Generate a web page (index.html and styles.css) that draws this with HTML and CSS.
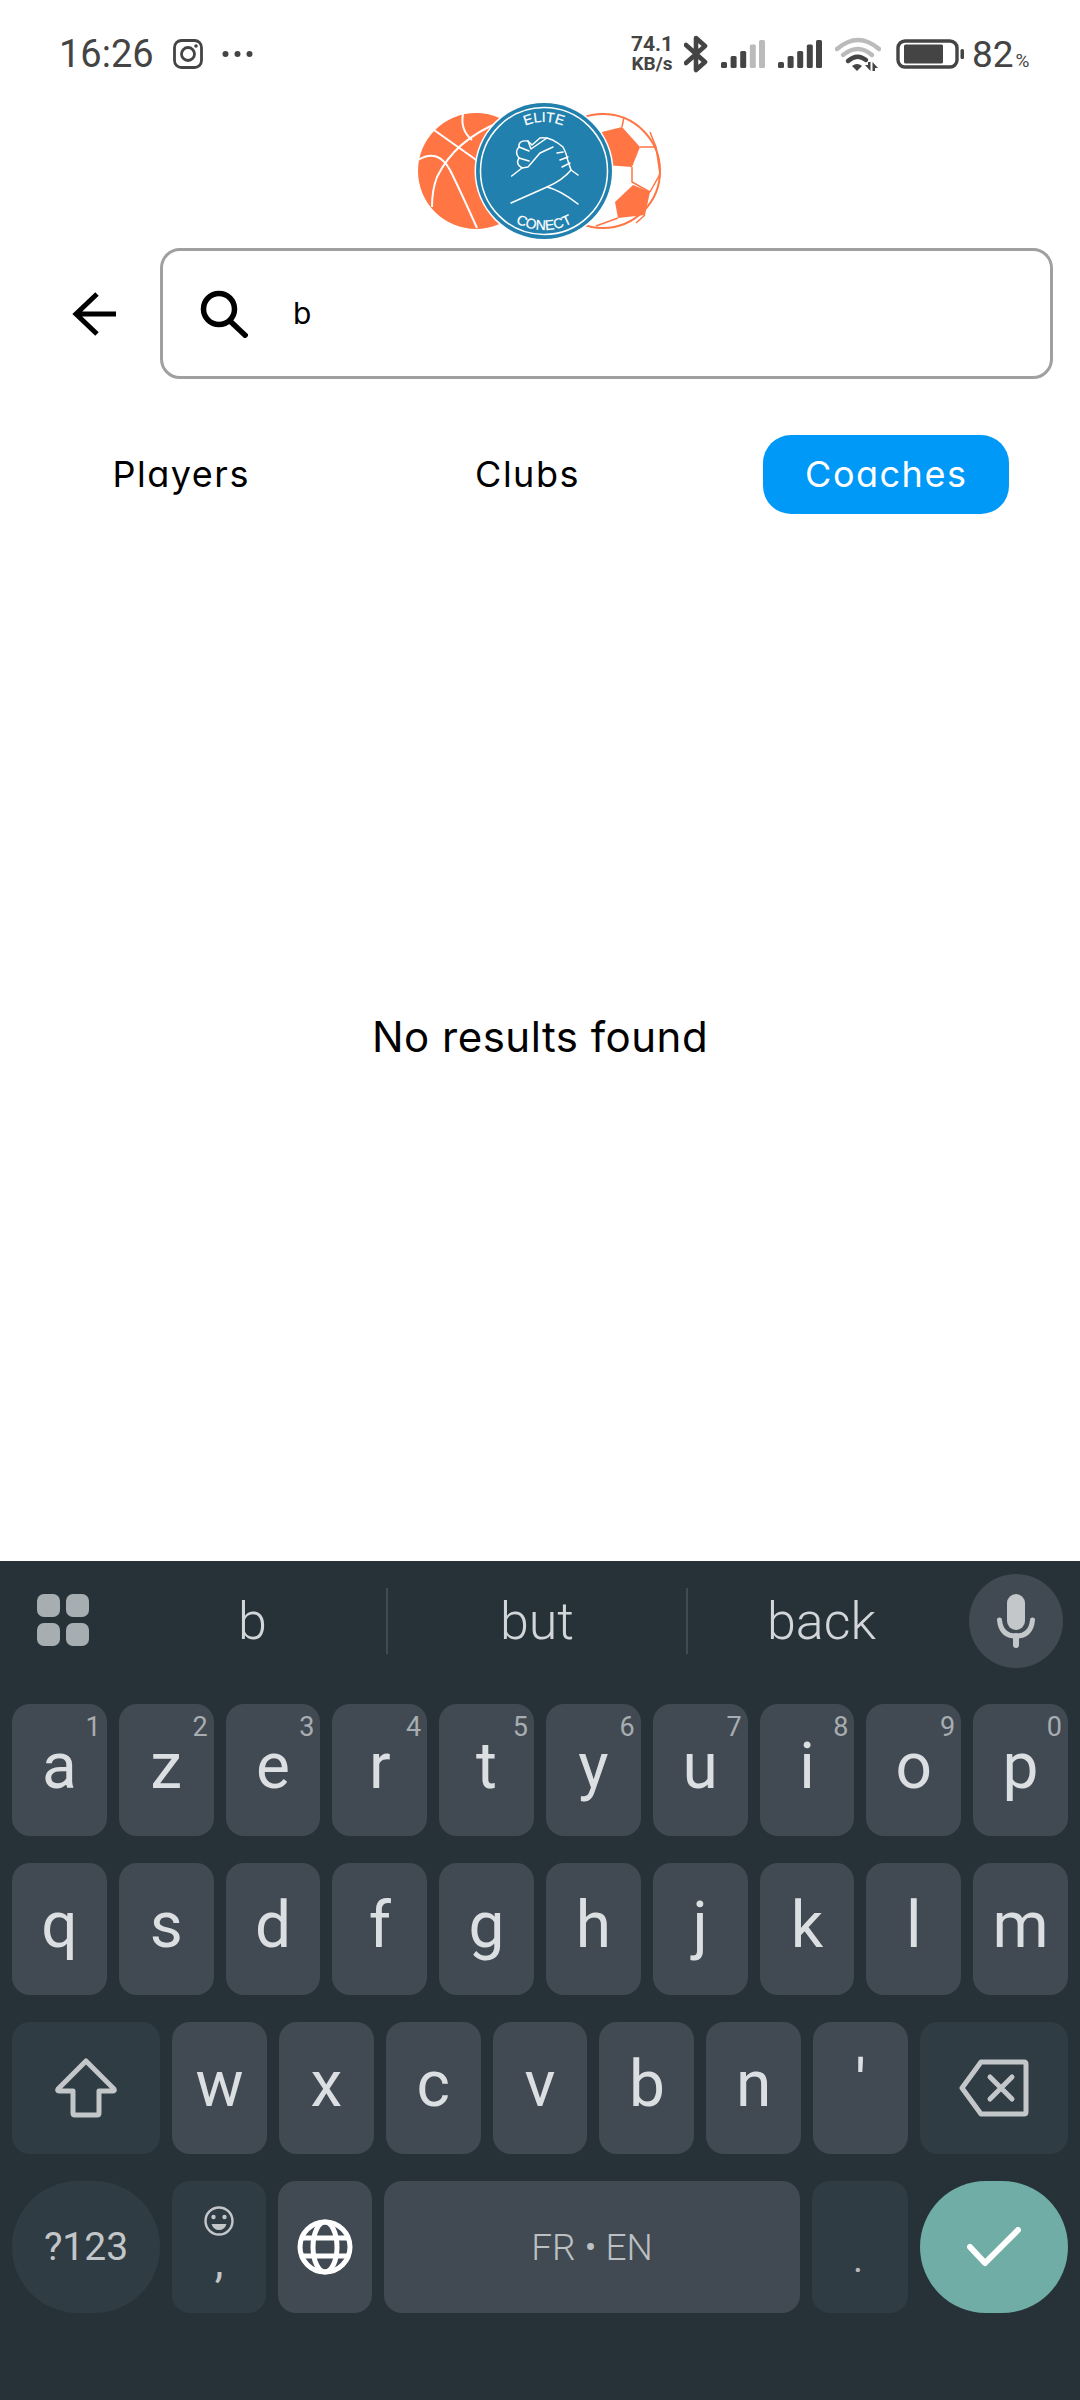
FILE: index.html
```html
<!DOCTYPE html>
<html lang="en">
<head>
    <meta charset="UTF-8" />
    <meta name="viewport" content="width=device-width, initial-scale=1.0" />
    <title>Elite Conect search</title>
    <link rel="stylesheet" href="styles.css">
</head>
<body>

<!-- Phone status bar -->
<header class="status">
    <div class="status-left">
        <span class="time">16:26</span>
        <svg class="ic-insta" viewBox="0 0 30 30"><rect x="1.5" y="1.5" width="27" height="27" rx="7" fill="none" stroke="#444" stroke-width="2.8"/><circle cx="15" cy="15" r="6.5" fill="none" stroke="#444" stroke-width="2.8"/><circle cx="23" cy="7" r="1.8" fill="#444"/></svg>
        <svg class="ic-dots" viewBox="0 0 31 8"><circle cx="3.5" cy="4" r="3" fill="#444"/><circle cx="15.5" cy="4" r="3" fill="#444"/><circle cx="27.5" cy="4" r="3" fill="#444"/></svg>
    </div>
    <div class="status-right">
        <span class="speed">74.1<br><span class="speed-unit">KB/s</span></span>
        <svg class="ic-bt" viewBox="0 0 24 38"><path d="M2 10 L21 27 L12 35 V3 L21 11 L2 28" fill="none" stroke="#444" stroke-width="4.6" stroke-linejoin="round" stroke-linecap="round"/></svg>
        <svg class="ic-signal" viewBox="0 0 44 30"><g fill="#444"><rect x="0" y="23" width="6" height="6" rx="1.5"/><rect x="9.6" y="17" width="6" height="12" rx="1.5"/><rect x="19.2" y="12" width="6" height="17" rx="1.5"/></g><g fill="#bbb"><rect x="28.8" y="5.5" width="6" height="23.5" rx="1.5"/><rect x="38" y="1" width="6" height="28" rx="1.5"/></g></svg>
        <svg class="ic-signal" viewBox="0 0 44 30"><g fill="#444"><rect x="0" y="23" width="6" height="6" rx="1.5"/><rect x="9.6" y="17" width="6" height="12" rx="1.5"/><rect x="19.2" y="12" width="6" height="17" rx="1.5"/><rect x="28.8" y="5.5" width="6" height="23.5" rx="1.5"/><rect x="38" y="1" width="6" height="28" rx="1.5"/></g></svg>
        <svg class="ic-wifi" viewBox="0 0 46 34"><g fill="none" stroke-linecap="round" stroke-width="4.4"><path d="M2 12 Q23 -6 44 12" stroke="#bbb"/><path d="M8 18 Q23 6 37 18" stroke="#bbb"/><path d="M13 24 Q22 16 31 23" stroke="#444"/></g><path d="M17 29 Q22 25 27 29 L22 34 Z" fill="#444"/><path d="M30 28 H33 V25 H35.5 V34 Z M37.5 25 L43 31 H40 V34 H37.5 Z" fill="#444"/></svg>
        <svg class="ic-batt" viewBox="0 0 68 30"><rect x="2" y="2" width="59" height="26" rx="7" fill="none" stroke="#444" stroke-width="3.4"/><rect x="8" y="5.5" width="39" height="19" rx="1.5" fill="#444"/><rect x="64.5" y="10" width="3.5" height="10" rx="1.5" fill="#444"/></svg>
        <span class="charge">82<small>%</small></span>
    </div>
</header>

<div class="logo">
    <svg viewBox="0 10 280 140" width="280" height="140">
        <!-- basketball -->
        <circle cx="76" cy="81" r="58" fill="#ff7544"/>
        <g fill="none" stroke="#fff" stroke-width="2">
            <path d="M100 32 Q55 50 37 87 Q32 100 32 117"/>
            <path d="M18 70 Q38 58 50 80 Q60 100 77 138"/>
            <path d="M63 24 Q60 40 72 50"/>
            <path d="M34 40 L82 74"/>
        </g>
        <!-- soccer ball -->
        <circle cx="203" cy="81" r="57" fill="#fff" stroke="#ff7544" stroke-width="2"/>
        <g fill="#ff7544">
            <path d="M202 42 L222 37 L240 57 L232 77 L205 75 Z"/>
            <path d="M233 95 L250 102 L245 125 L218 128 L215 112 Z"/>
        </g>
        <g fill="none" stroke="#ff7544" stroke-width="1.5">
            <path d="M222 37 L224 27 M240 57 L256 57 L260 84 L250 102 M232 77 L232 92 L250 102 M245 125 L236 133 M218 128 L196 136 M256 57 L250 42"/>
        </g>
        <!-- badge -->
        <circle cx="144" cy="81" r="69.5" fill="#fff"/>
        <circle cx="144" cy="81" r="68" fill="#2180ad"/>
        <circle cx="144" cy="81" r="63.5" fill="none" stroke="#fff" stroke-width="1.5"/>
        <defs>
            <path id="arc-top" d="M95 81 A49 49 0 0 1 193 81"/>
            <path id="arc-bottom" d="M85 81 A59 59 0 0 0 203 81"/>
        </defs>
        <text class="logo-text"><textPath href="#arc-top" startOffset="50%" text-anchor="middle">ELITE</textPath></text>
        <text class="logo-text"><textPath href="#arc-bottom" startOffset="50%" text-anchor="middle">CONECT</textPath></text>
        <g fill="none" stroke="#fff" stroke-width="1.5" stroke-linecap="round" stroke-linejoin="round">
            <path d="M111.7 86 L122 78 Q115 74 119 68 Q114 62 119 57 Q118 50 128 51 L132 55 L140 48 Q150 46 163 57 Q167 65 167 68 L171 80 Q163 90 147 97 L111 113"/>
            <path d="M119 68 L129 71 M119 57 L129 61 M128 51 L131 59 L147 48"/>
            <path d="M122 78 L128 77 L140 63 L153 57"/>
            <path d="M157 63 L163 62 M160 70 L168 67 M162 77 L170 73"/>
            <path d="M171 80 L178 85 M147 97 Q160 100 178 114"/>
        </g>
    </svg>
</div>

<div class="search-row">
    <svg class="ic-back" viewBox="0 0 44 44"><path d="M44 22 H5 M25 2 L4 22 L25 42" fill="none" stroke="#000" stroke-width="5"/></svg>
    <div class="search-box">
        <svg class="ic-search" viewBox="0 0 48 48"><circle cx="19" cy="19" r="15.5" fill="none" stroke="#000" stroke-width="5.5"/><path d="M30 31 L47 47" stroke="#000" stroke-width="5.5"/></svg>
        <span class="search-text">b</span>
    </div>
</div>

<nav class="tabs">
    <span class="tab">Players</span>
    <span class="tab">Clubs</span>
    <span class="tab tab-active">Coaches</span>
</nav>

<main class="results">
    <p>No results found</p>
</main>

<!-- Keyboard -->
<section class="keyboard">
    <div class="strip">
        <div class="apps">
            <i></i><i></i><i></i><i></i>
        </div>
        <div class="suggestions">
            <span>b</span>
            <span class="sep"></span>
            <span class="mid">but</span>
            <span class="sep"></span>
            <span>back</span>
        </div>
        <div class="mic">
            <svg viewBox="0 0 38 54" width="38" height="54"><rect x="10" y="0" width="18" height="36" rx="9" fill="#c3c7ca"/><path d="M2.5 26 Q4 42 19 42 Q34 42 35.5 26" fill="none" stroke="#c3c7ca" stroke-width="5" stroke-linecap="round"/><path d="M19 42 V51" stroke="#c3c7ca" stroke-width="6" stroke-linecap="round"/></svg>
        </div>
    </div>

    <div class="row">
        <span class="key">a<sup>1</sup></span>
        <span class="key">z<sup>2</sup></span>
        <span class="key">e<sup>3</sup></span>
        <span class="key">r<sup>4</sup></span>
        <span class="key">t<sup>5</sup></span>
        <span class="key">y<sup>6</sup></span>
        <span class="key">u<sup>7</sup></span>
        <span class="key">i<sup>8</sup></span>
        <span class="key">o<sup>9</sup></span>
        <span class="key">p<sup>0</sup></span>
    </div>
    <div class="row">
        <span class="key">q</span>
        <span class="key">s</span>
        <span class="key">d</span>
        <span class="key">f</span>
        <span class="key">g</span>
        <span class="key">h</span>
        <span class="key">j</span>
        <span class="key">k</span>
        <span class="key">l</span>
        <span class="key">m</span>
    </div>
    <div class="row">
        <span class="key key-wide key-dark">
            <svg viewBox="0 0 62 60" width="62" height="60"><path d="M31 3 L59 31 Q60 33 58 33 H44 V55 Q44 57 42 57 H20 Q18 57 18 55 V33 H4 Q2 33 3 31 Z" fill="none" stroke="#c3c7ca" stroke-width="5" stroke-linejoin="round"/></svg>
        </span>
        <span class="key">w</span>
        <span class="key">x</span>
        <span class="key">c</span>
        <span class="key">v</span>
        <span class="key">b</span>
        <span class="key">n</span>
        <span class="key">'</span>
        <span class="key key-wide key-dark">
            <svg viewBox="0 0 70 58" width="70" height="58"><path d="M22 3 H65 Q67 3 67 5 V53 Q67 55 65 55 H22 L3 29 Z" fill="none" stroke="#c3c7ca" stroke-width="5" stroke-linejoin="round"/><path d="M31 18 L53 40 M53 18 L31 40" stroke="#c3c7ca" stroke-width="5" stroke-linecap="round"/></svg>
        </span>
    </div>
    <div class="row">
        <span class="key key-wide key-dark key-round key-label">?123</span>
        <span class="key key-fixed key-dark key-comma">
            <svg viewBox="0 0 30 30" width="30" height="30"><circle cx="15" cy="15" r="13.5" fill="none" stroke="#c3c7ca" stroke-width="2.4"/><circle cx="9.5" cy="11" r="2.2" fill="#c3c7ca"/><circle cx="20.5" cy="11" r="2.2" fill="#c3c7ca"/><path d="M7.5 18 H22.5 Q20.5 24 15 24 Q9.5 24 7.5 18 Z" fill="#c3c7ca"/></svg>
            <span class="comma">,</span>
        </span>
        <span class="key key-fixed">
            <svg viewBox="0 0 56 56" width="56" height="56"><g fill="none" stroke="#fff" stroke-width="5"><circle cx="28" cy="28" r="25"/><ellipse cx="28" cy="28" rx="12" ry="25"/><path d="M4 19 H52 M4 37 H52"/></g></svg>
        </span>
        <span class="key key-space">FR • EN</span>
        <span class="key key-dark key-period">.</span>
        <span class="key key-wide key-round key-enter">
            <svg viewBox="0 0 54 40" width="54" height="40"><path d="M3 20 L18 36 L51 3" fill="none" stroke="#fff" stroke-width="6" stroke-linecap="round" stroke-linejoin="round"/></svg>
        </span>
    </div>
</section>

</body>
</html>
```

FILE: styles.css
```css
* {
    box-sizing: border-box;
}
body {
    width: 1080px;
    height: 2400px;
    margin: 0;
    background: #fff;
    display: flex;
    flex-direction: column;
    font-family: Inter, "Noto Sans", sans-serif;
    font-feature-settings: "cv11";
    overflow: hidden;
}
svg {
    display: block;
    flex: none;
}

/* status bar */
.status {
    height: 100px;
    padding: 8px 51px 0 59px;
    display: flex;
    justify-content: space-between;
    align-items: center;
    font-family: Roboto, sans-serif;
    color: #444;
}
.status-left,
.status-right {
    display: flex;
    align-items: center;
}
.time {
    font-size: 38px;
    width: 91px;
    white-space: nowrap;
}
.ic-insta {
    width: 30px;
    height: 30px;
    margin-left: 23px;
}
.ic-dots {
    width: 31px;
    height: 8px;
    margin-left: 19px;
}
.speed {
    width: 44px;
    text-align: center;
    font-size: 21px;
    font-weight: 700;
    line-height: 19px;
}
.speed-unit {
    font-size: 19px;
}
.ic-bt {
    width: 24px;
    height: 38px;
    margin-left: 10px;
}
.ic-signal {
    width: 44px;
    height: 30px;
    margin-left: 13px;
}
.ic-wifi {
    width: 46px;
    height: 34px;
    margin-left: 13px;
}
.ic-batt {
    width: 68px;
    height: 30px;
    margin-left: 15px;
}
.charge {
    font-size: 37px;
    margin-left: 8px;
    width: 57px;
    white-space: nowrap;
}
.charge small {
    font-size: 19px;
    margin-left: 2px;
}

/* logo + search */
.logo {
    height: 140px;
    display: flex;
    justify-content: center;
}
.logo-text {
    fill: #fff;
    font-family: "Liberation Sans", Arial, sans-serif;
    font-size: 14px;
    stroke: #fff;
    stroke-width: 0.2px;
}
.search-row {
    margin-top: 8px;
    padding: 0 27px 0 72px;
    display: flex;
    align-items: center;
    gap: 44px;
}
.ic-back {
    width: 44px;
    height: 44px;
}
.search-box {
    flex: 1;
    height: 131px;
    border: 3px solid #a0a0a0;
    border-radius: 20px;
    padding-left: 37px;
    display: flex;
    align-items: center;
    gap: 45px;
}
.ic-search {
    width: 48px;
    height: 48px;
}
.search-text {
    font-size: 30px;
    padding-bottom: 2px;
    color: #000;
}

/* tabs */
.tabs {
    margin-top: 56px;
    height: 79px;
    display: flex;
    justify-content: space-around;
    align-items: stretch;
}
.tab {
    padding: 0 42px 2px;
    border-radius: 28px;
    display: flex;
    align-items: center;
    font-size: 36px;
    letter-spacing: 1.5px;
    color: #000;
}
.tab-active {
    background: #0099f8;
    color: #fff;
}

/* empty result */
.results {
    flex: 1;
    padding-bottom: 2px;
    display: flex;
    align-items: center;
    justify-content: center;
}
.results p {
    margin: 0;
    font-size: 42px;
    letter-spacing: 0.5px;
    color: #000;
}

/* keyboard */
.keyboard {
    height: 839px;
    flex: none;
    background: #273238;
    font-family: Roboto, sans-serif;
    padding: 0 12px;
}
.strip {
    height: 143px;
    margin: 0 -12px;
    padding: 13px 17px 0 37px;
    display: flex;
    align-items: flex-start;
}
.apps {
    width: 52px;
    margin-top: 20px;
    display: grid;
    grid-template-columns: 23px 23px;
    gap: 6px;
}
.apps i {
    height: 23px;
    background: #a7aeb2;
    border-radius: 7px;
}
.suggestions {
    width: 836px;
    height: 94px;
    margin-left: 30px;
    display: flex;
    align-items: center;
    font-size: 52px;
    font-weight: 350;
    color: #d2d6d9;
}
.suggestions span {
    flex: 1;
    text-align: center;
}
.suggestions .mid {
    flex: none;
    width: 298px;
}
.suggestions .sep {
    flex: none;
    width: 2px;
    height: 66px;
    background: #3f4a51;
}
.mic {
    width: 94px;
    height: 94px;
    margin-left: 14px;
    border-radius: 50%;
    background: #414a52;
    display: flex;
    align-items: center;
    justify-content: center;
}
.row {
    display: flex;
    gap: 12px;
    margin-bottom: 27px;
}
.key {
    position: relative;
    flex: 1;
    height: 132px;
    padding-bottom: 8px;
    border-radius: 18px;
    background: #414a52;
    color: #dcdfe2;
    font-size: 64px;
    display: flex;
    align-items: center;
    justify-content: center;
}
.key sup {
    position: absolute;
    top: 7px;
    right: 6px;
    font-size: 27px;
    line-height: 32px;
    color: #a7adb1;
}
.key svg {
    margin-top: 8px;
}
.key-fixed {
    flex: none;
    width: 94px;
}
.key-wide {
    flex: none;
    width: 148px;
}
.key-dark {
    background: #303c43;
}
.key-round {
    border-radius: 66px;
}
.key-label {
    font-size: 39px;
    color: #c2c6c9;
    padding-bottom: 0;
}
.key-comma {
    flex-direction: column;
    justify-content: flex-start;
    padding: 25px 0 0;
}
.key-comma svg {
    margin-top: 0;
}
.comma {
    font-size: 44px;
    line-height: 40px;
    margin-top: 6px;
    color: #c2c6c9;
}
.key-space {
    flex: none;
    width: 416px;
    font-size: 37px;
    font-weight: 300;
    color: #bcc0c3;
    padding-bottom: 0;
}
.key-period {
    font-size: 38px;
    color: #b8bcbf;
    align-items: flex-end;
    padding: 0 4px 32px 0;
}
.key-enter {
    background: #6fada6;
}
```
